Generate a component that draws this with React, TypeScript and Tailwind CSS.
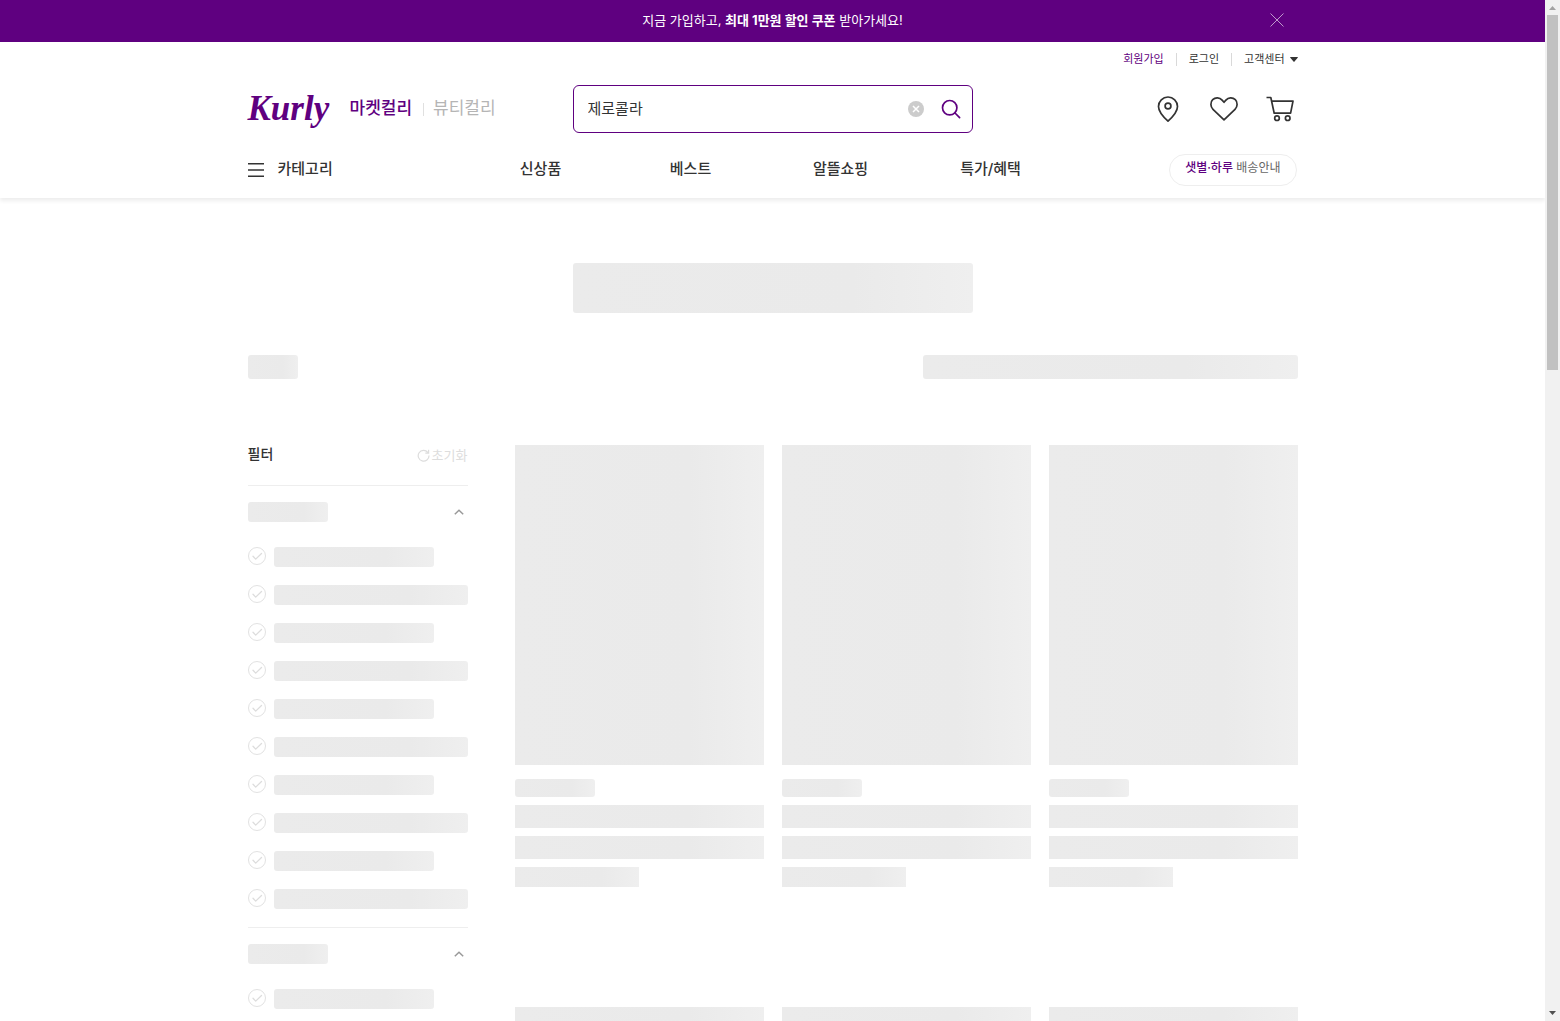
import React from "react";

const SHIMMER = "bg-[linear-gradient(90deg,#ebebeb_0%,#eaeaea_70%,#efefef_100%)]";

function Bone({ className }: { className: string }) {
  return <div aria-hidden="true" className={`${SHIMMER} ${className}`} />;
}

function Banner() {
  return (
    <div className="bg-[#5f0080] text-white">
      <div className="mx-auto grid h-[42px] w-full max-w-[1050px] grid-cols-[1fr_auto_1fr] items-center text-[13px]">
        <a href="#join" className="col-start-2">
          지금 가입하고, <strong className="font-bold">최대 1만원 할인 쿠폰</strong> 받아가세요!
        </a>
        <button type="button" aria-label="닫기" className="mr-3 mb-0.5 justify-self-end">
          <svg width="18" height="18" viewBox="0 0 18 18" fill="none" stroke="#fff" strokeOpacity=".6">
            <path d="M2.5 2.5l13 13M15.5 2.5l-13 13" />
          </svg>
        </button>
      </div>
    </div>
  );
}

function UserMenu() {
  return (
    <div className="flex h-[35px] items-center justify-end text-[11px] text-[#333]">
      <a href="#signup" className="text-[#5f0080]">회원가입</a>
      <span className="mx-3 h-[13px] w-px bg-[#d9d9d9]" />
      <a href="#login">로그인</a>
      <span className="mx-3 h-[13px] w-px bg-[#d9d9d9]" />
      <button type="button" aria-haspopup="menu" className="flex items-center gap-[5px]">
        고객센터
        <svg width="8" height="5" viewBox="0 0 8 5" fill="#333">
          <path d="M.6 0h6.800q.9 0 .3.700L4.500 4.600q-.5.6-1 0L.3.700Q-.3 0 .6 0z" />
        </svg>
      </button>
    </div>
  );
}

function SearchBox() {
  return (
    <form role="search" className="flex h-12 items-center rounded-md border border-[#5f0080] pr-[10px] pl-[14px]">
      <input
        aria-label="검색어"
        defaultValue="제로콜라"
        className="min-w-0 flex-1 bg-transparent text-[15px] text-[#333] outline-none"
      />
      <button type="button" aria-label="지우기" className="mr-4">
        <svg width="16" height="16" viewBox="0 0 16 16" fill="none">
          <circle cx="8" cy="8" r="8" fill="#ccc" />
          <path d="M5 5l6 6M11 5l-6 6" stroke="#fff" strokeWidth="1.5" />
        </svg>
      </button>
      <button type="submit" aria-label="검색">
        <svg width="22" height="22" viewBox="0 0 22 22" fill="none" stroke="#5f0080" strokeWidth="1.7">
          <circle cx="9.700" cy="9.700" r="7.200" />
          <path d="M15 15l4.600 4.600" strokeLinecap="round" />
        </svg>
      </button>
    </form>
  );
}

function HeaderIcons() {
  return (
    <div className="flex items-center justify-end gap-5">
      <button type="button" aria-label="배송지">
        <svg width="36" height="36" viewBox="0 0 36 36" fill="none" stroke="#333" strokeWidth="1.700">
          <path d="M18 30.200C14.500 27 8.500 21.500 8.500 15.500a9.500 9.500 0 0 1 19 0C27.500 21.500 21.500 27 18 30.200z" strokeLinejoin="round" />
          <circle cx="18" cy="15" r="2.900" />
        </svg>
      </button>
      <button type="button" aria-label="찜하기">
        <svg width="36" height="36" viewBox="0 0 36 36" fill="none" stroke="#333" strokeWidth="1.700" strokeLinejoin="round">
          <path d="M18 28.900L7 18.300C4.300 15.600 4.200 11.200 6.700 8.700c2.700-2.600 6.900-2.300 9.400.4L18 11.300l1.900-2.200c2.500-2.700 6.700-3 9.400-.4 2.500 2.500 2.400 6.900-.3 9.600z" />
        </svg>
      </button>
      <button type="button" aria-label="장바구니">
        <svg width="36" height="36" viewBox="0 0 36 36" fill="none" stroke="#333" strokeWidth="1.700">
          <path d="M4.500 6.500h4.300l3.400 15.700h16.400l2.400-12H9.700" strokeLinejoin="round" />
          <circle cx="15" cy="27.200" r="2.300" />
          <circle cx="25.700" cy="27.200" r="2.300" />
        </svg>
      </button>
    </div>
  );
}

const NAV = ["신상품", "베스트", "알뜰쇼핑", "특가/혜택"];

function Header() {
  return (
    <header className="relative shadow-[0_3px_4px_0_rgba(0,0,0,0.07)]">
      <div className="mx-auto w-full max-w-[1050px]">
        <UserMenu />
        <div className="mt-2 grid grid-cols-[1fr_minmax(0,400px)_1fr] items-center">
          <div className="flex items-center text-[17px]">
            <a
              href="#home"
              className="mr-5 w-[82px] font-['Liberation_Serif',serif] text-[35px] leading-10 font-bold text-[#5f0080] italic"
            >
              Kurly
            </a>
            <a href="#market" className="font-medium text-[#5f0080]">마켓컬리</a>
            <span className="mr-[9px] ml-[11px] h-[13px] w-px bg-[#e0e0e0]" />
            <a href="#beauty" className="text-[#b5b5b5]">뷰티컬리</a>
          </div>
          <SearchBox />
          <HeaderIcons />
        </div>
        <nav className="mt-2 flex h-[57px] items-center text-[15px] font-medium text-[#333]">
          <button type="button" className="flex w-[218px] items-center gap-[14px]">
            <svg width="16" height="14" viewBox="0 0 16 14" fill="#333">
              <path d="M0 0h16v1.500H0zM0 6.300h16v1.500H0zM0 12.500h16V14H0z" />
            </svg>
            카테고리
          </button>
          <ul className="grid w-[600px] grid-cols-4 text-center">
            {NAV.map((item) => (
              <li key={item}>
                <a href="#nav">{item}</a>
              </li>
            ))}
          </ul>
          <button
            type="button"
            className="mr-px ml-auto h-8 rounded-full border border-[#eee] px-[15px] pb-[3px] text-xs font-normal text-[#666]"
          >
            <span className="font-medium text-[#5f0080]">샛별·하루</span> 배송안내
          </button>
        </nav>
      </div>
    </header>
  );
}

function FilterGroup({ rows }: { rows: number }) {
  return (
    <section className="border-t border-[#eee] pt-4 pb-[18px]">
      <div className="mb-[25px] flex items-center justify-between">
        <Bone className="h-5 w-20 rounded-[3px]" />
        <button type="button" aria-label="접기">
          <svg width="18" height="18" viewBox="0 0 18 18" fill="none" stroke="#999" strokeWidth="1.500">
            <path d="M4.800 11.200L9 7.200l4.200 4" />
          </svg>
        </button>
      </div>
      <ul className="flex flex-col gap-[18px]">
        {Array.from({ length: rows }, (_, i) => (
          <li key={i} className="flex items-start gap-2">
            <span className="grid">
              <input
                type="checkbox"
                aria-label={`필터 ${i + 1}`}
                className="size-[18px] appearance-none rounded-full border border-[#e2e2e2] [grid-area:1/1]"
              />
              <svg className="pointer-events-none [grid-area:1/1]" width="18" height="18" viewBox="0 0 18 18" fill="none" stroke="#ddd" strokeWidth="1.300">
                <path d="M5 9.300l2.700 2.800L13.500 6.500" strokeLinecap="round" strokeLinejoin="round" />
              </svg>
            </span>
            <Bone className={i % 2 ? "h-5 flex-1 rounded-[3px]" : "h-5 w-40 rounded-[3px]"} />
          </li>
        ))}
      </ul>
    </section>
  );
}

function Filters() {
  return (
    <aside className="w-[220px] shrink-0">
      <div className="flex h-10 items-start justify-between">
        <h2 className="text-[14px] leading-[18px] font-medium text-[#333]">필터</h2>
        <button type="button" className="flex items-center gap-0.5 text-[13px] leading-5 text-[#ddd]">
          <svg width="13" height="13" viewBox="0 0 13 13" fill="none" stroke="#ddd" strokeWidth="1.200">
            <path d="M10.800 3.300A5.400 5.400 0 1 0 12 6.500M11.600.8v3.400H8.300" />
          </svg>
          초기화
        </button>
      </div>
      <FilterGroup rows={10} />
      <FilterGroup rows={6} />
    </aside>
  );
}

function ProductCard() {
  return (
    <li>
      <Bone className="h-80" />
      <Bone className="mt-[14px] h-[18px] w-20 rounded-[3px]" />
      <Bone className="mt-2 h-[23px]" />
      <Bone className="mt-2 h-[23px]" />
      <Bone className="mt-2 h-5 w-[124px]" />
    </li>
  );
}

function ScrollRail() {
  return (
    <div aria-hidden="true" className="flex w-[15px] shrink-0 flex-col items-center bg-[#f1f1f1]">
      <svg className="shrink-0" width="15" height="15" viewBox="0 0 15 15" fill="#a3a3a3">
        <path d="M7.500 6L11 10H4z" />
      </svg>
      <div className="min-h-0 w-[11px] flex-1">
        <div className="h-[35.8%] bg-[#c1c1c1]" />
      </div>
      <svg className="shrink-0" width="15" height="15" viewBox="0 0 15 15" fill="#505050">
        <path d="M4 5h7L7.500 9z" />
      </svg>
    </div>
  );
}

export default function App() {
  return (
    <div className="flex h-screen overflow-hidden bg-white font-['Inter','Noto_Sans_CJK_KR',sans-serif]">
      <div className="min-w-0 flex-1 overflow-hidden">
        <Banner />
        <Header />
        <main className="mx-auto w-full max-w-[1050px] pt-[65px]">
          <Bone className="mx-auto h-[50px] w-[400px] rounded-[3px]" />
          <div className="mt-[42px] flex justify-between">
            <Bone className="h-6 w-[50px] rounded-[3px]" />
            <Bone className="h-6 w-[375px] rounded-[3px]" />
          </div>
          <div className="mt-[66px] flex gap-[47px]">
            <Filters />
            <ul className="grid flex-1 grid-cols-3 content-start gap-x-[18px] gap-y-[120px]">
              {Array.from({ length: 6 }, (_, i) => (
                <ProductCard key={i} />
              ))}
            </ul>
          </div>
        </main>
      </div>
      <ScrollRail />
    </div>
  );
}
